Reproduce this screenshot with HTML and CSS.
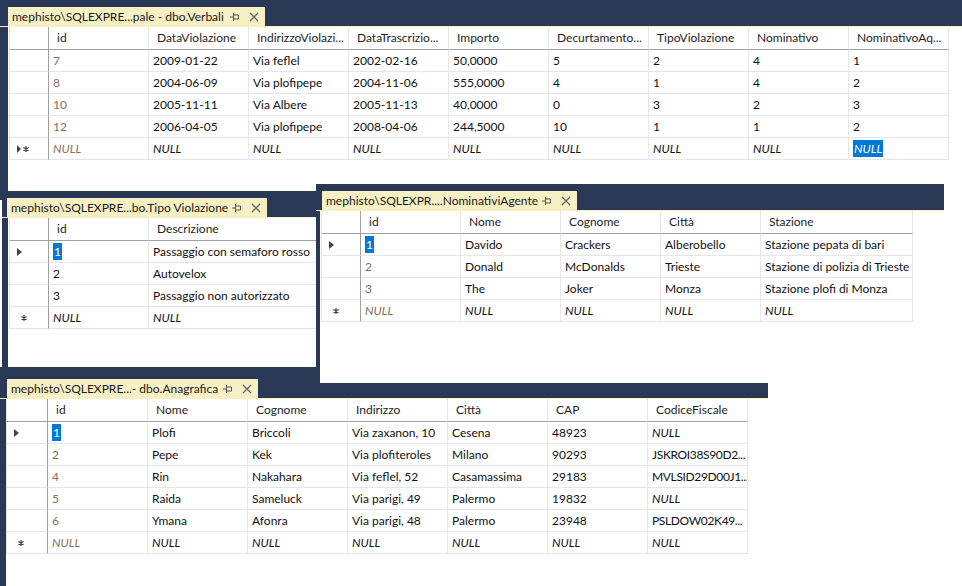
FILE: index.html
```html
<!DOCTYPE html>
<html>
<head>
<meta charset="utf-8">
<link rel="stylesheet" href="styles.css">
</head>
<body>
<div class="desk">

  <!-- Window 1: Verbali -->
  <div class="win w1">
    <div class="bar">
      <div class="tab t1"><span class="ttl">mephisto\SQLEXPRE...pale - dbo.Verbali</span>
        <svg class="pin" width="10" height="10" viewBox="0 0 10 10"><path d="M0 5h3M3.5 1v8M3.5 3h5v4h-5" fill="none" stroke="#555" stroke-width="1"/></svg>
        <svg class="cls" width="10" height="10" viewBox="0 0 10 10"><path d="M1 1l8 8M9 1l-8 8" stroke="#666" stroke-width="1.3"/></svg>
      </div>
    </div>
    <div class="line"></div>
    <div class="body">
      <div class="grid g1">
        <div class="row hdr"><div class="c rh"></div><div class="c">id</div><div class="c">DataViolazione</div><div class="c">IndirizzoViolazi...</div><div class="c">DataTrascrizio...</div><div class="c">Importo</div><div class="c">Decurtamento...</div><div class="c">TipoViolazione</div><div class="c">Nominativo</div><div class="c">NominativoAq...</div></div>
        <div class="row"><div class="c rh"></div><div class="c ro">7</div><div class="c">2009-01-22</div><div class="c">Via feflel</div><div class="c">2002-02-16</div><div class="c">50,0000</div><div class="c">5</div><div class="c">2</div><div class="c">4</div><div class="c">1</div></div>
        <div class="row"><div class="c rh"></div><div class="c ro">8</div><div class="c">2004-06-09</div><div class="c">Via plofipepe</div><div class="c">2004-11-06</div><div class="c">555,0000</div><div class="c">4</div><div class="c">1</div><div class="c">4</div><div class="c">2</div></div>
        <div class="row"><div class="c rh"></div><div class="c ro">10</div><div class="c">2005-11-11</div><div class="c">Via Albere</div><div class="c">2005-11-13</div><div class="c">40,0000</div><div class="c">0</div><div class="c">3</div><div class="c">2</div><div class="c">3</div></div>
        <div class="row"><div class="c rh"></div><div class="c ro">12</div><div class="c">2006-04-05</div><div class="c">Via plofipepe</div><div class="c">2008-04-06</div><div class="c">244,5000</div><div class="c">10</div><div class="c">1</div><div class="c">1</div><div class="c">2</div></div>
        <div class="row"><div class="c rh"><svg class="arr" width="4" height="8" viewBox="0 0 4 8"><path d="M0 0L4 4L0 8Z" fill="#444"/></svg><svg class="ast" width="6" height="6" viewBox="0 0 6 6"><path d="M3 0v6M0.4 1.5l5.2 3M0.4 4.5l5.2-3" stroke="#444" stroke-width="1.2"/></svg></div><div class="c ro nul">NULL</div><div class="c nul">NULL</div><div class="c nul">NULL</div><div class="c nul">NULL</div><div class="c nul">NULL</div><div class="c nul">NULL</div><div class="c nul">NULL</div><div class="c nul">NULL</div><div class="c nul"><span class="sel">NULL</span></div></div>
      </div>
    </div>
  </div>

  <!-- Window 2: Tipo Violazione -->
  <div class="win w2">
    <div class="bar">
      <div class="tab t2"><span class="ttl">mephisto\SQLEXPRE...bo.Tipo Violazione</span>
        <svg class="pin" width="10" height="10" viewBox="0 0 10 10"><path d="M0 5h3M3.5 1v8M3.5 3h5v4h-5" fill="none" stroke="#555" stroke-width="1"/></svg>
        <svg class="cls" width="10" height="10" viewBox="0 0 10 10"><path d="M1 1l8 8M9 1l-8 8" stroke="#666" stroke-width="1.3"/></svg>
      </div>
    </div>
    <div class="line"></div>
    <div class="body">
      <div class="grid g2">
        <div class="row hdr"><div class="c rh"></div><div class="c">id</div><div class="c">Descrizione</div></div>
        <div class="row"><div class="c rh"><svg class="arr" width="5" height="8" viewBox="0 0 5 8"><path d="M0 0L5 4L0 8Z" fill="#444"/></svg></div><div class="c"><span class="sel">1</span></div><div class="c">Passaggio con semaforo rosso</div></div>
        <div class="row"><div class="c rh"></div><div class="c">2</div><div class="c">Autovelox</div></div>
        <div class="row"><div class="c rh"></div><div class="c">3</div><div class="c">Passaggio non autorizzato</div></div>
        <div class="row"><div class="c rh"><svg class="ast" width="6" height="6" viewBox="0 0 6 6"><path d="M3 0v6M0.4 1.5l5.2 3M0.4 4.5l5.2-3" stroke="#444" stroke-width="1.2"/></svg></div><div class="c nul">NULL</div><div class="c nul">NULL</div></div>
      </div>
    </div>
  </div>

  <!-- Window 4: Anagrafica -->
  <div class="win w4">
    <div class="bar">
      <div class="tab t4"><span class="ttl">mephisto\SQLEXPRE...- dbo.Anagrafica</span>
        <svg class="pin" width="10" height="10" viewBox="0 0 10 10"><path d="M0 5h3M3.5 1v8M3.5 3h5v4h-5" fill="none" stroke="#555" stroke-width="1"/></svg>
        <svg class="cls" width="10" height="10" viewBox="0 0 10 10"><path d="M1 1l8 8M9 1l-8 8" stroke="#666" stroke-width="1.3"/></svg>
      </div>
    </div>
    <div class="line"></div>
    <div class="body">
      <div class="grid g4">
        <div class="row hdr"><div class="c rh"></div><div class="c">id</div><div class="c">Nome</div><div class="c">Cognome</div><div class="c">Indirizzo</div><div class="c">Città</div><div class="c">CAP</div><div class="c">CodiceFiscale</div></div>
        <div class="row"><div class="c rh"><svg class="arr" width="5" height="8" viewBox="0 0 5 8"><path d="M0 0L5 4L0 8Z" fill="#444"/></svg></div><div class="c"><span class="sel">1</span></div><div class="c">Plofi</div><div class="c">Briccoli</div><div class="c">Via zaxanon, 10</div><div class="c">Cesena</div><div class="c">48923</div><div class="c nul">NULL</div></div>
        <div class="row"><div class="c rh"></div><div class="c ro">2</div><div class="c">Pepe</div><div class="c">Kek</div><div class="c">Via plofiteroles</div><div class="c">Milano</div><div class="c">90293</div><div class="c fit">JSKROI38S90D2...</div></div>
        <div class="row"><div class="c rh"></div><div class="c ro">4</div><div class="c">Rin</div><div class="c">Nakahara</div><div class="c">Via feflel, 52</div><div class="c">Casamassima</div><div class="c">29183</div><div class="c fit">MVLSID29D00J1...</div></div>
        <div class="row"><div class="c rh"></div><div class="c ro">5</div><div class="c">Raida</div><div class="c">Sameluck</div><div class="c">Via parigi, 49</div><div class="c">Palermo</div><div class="c">19832</div><div class="c nul">NULL</div></div>
        <div class="row"><div class="c rh"></div><div class="c ro">6</div><div class="c">Ymana</div><div class="c">Afonra</div><div class="c">Via parigi, 48</div><div class="c">Palermo</div><div class="c">23948</div><div class="c fit">PSLDOW02K49...</div></div>
        <div class="row"><div class="c rh"><svg class="ast" width="6" height="6" viewBox="0 0 6 6"><path d="M3 0v6M0.4 1.5l5.2 3M0.4 4.5l5.2-3" stroke="#444" stroke-width="1.2"/></svg></div><div class="c ro nul">NULL</div><div class="c nul">NULL</div><div class="c nul">NULL</div><div class="c nul">NULL</div><div class="c nul">NULL</div><div class="c nul">NULL</div><div class="c nul">NULL</div></div>
      </div>
    </div>
  </div>

  <!-- Window 3: NominativiAgente -->
  <div class="win w3">
    <div class="bar">
      <div class="tab t3"><span class="ttl">mephisto\SQLEXPR....NominativiAgente</span>
        <svg class="pin" width="10" height="10" viewBox="0 0 10 10"><path d="M0 5h3M3.5 1v8M3.5 3h5v4h-5" fill="none" stroke="#555" stroke-width="1"/></svg>
        <svg class="cls" width="10" height="10" viewBox="0 0 10 10"><path d="M1 1l8 8M9 1l-8 8" stroke="#666" stroke-width="1.3"/></svg>
      </div>
    </div>
    <div class="line"></div>
    <div class="body">
      <div class="grid g3">
        <div class="row hdr"><div class="c rh"></div><div class="c">id</div><div class="c">Nome</div><div class="c">Cognome</div><div class="c">Città</div><div class="c">Stazione</div></div>
        <div class="row"><div class="c rh"><svg class="arr" width="5" height="8" viewBox="0 0 5 8"><path d="M0 0L5 4L0 8Z" fill="#444"/></svg></div><div class="c"><span class="sel">1</span></div><div class="c">Davido</div><div class="c">Crackers</div><div class="c">Alberobello</div><div class="c">Stazione pepata di bari</div></div>
        <div class="row"><div class="c rh"></div><div class="c ro">2</div><div class="c">Donald</div><div class="c">McDonalds</div><div class="c">Trieste</div><div class="c">Stazione di polizia di Trieste</div></div>
        <div class="row"><div class="c rh"></div><div class="c ro">3</div><div class="c">The</div><div class="c">Joker</div><div class="c">Monza</div><div class="c">Stazione plofi di Monza</div></div>
        <div class="row"><div class="c rh"><svg class="ast" width="6" height="6" viewBox="0 0 6 6"><path d="M3 0v6M0.4 1.5l5.2 3M0.4 4.5l5.2-3" stroke="#444" stroke-width="1.2"/></svg></div><div class="c ro nul">NULL</div><div class="c nul">NULL</div><div class="c nul">NULL</div><div class="c nul">NULL</div><div class="c nul">NULL</div></div>
      </div>
    </div>
  </div>

</div>
</body>
</html>
```

FILE: styles.css
```css
* { box-sizing: border-box; }
html, body { margin: 0; padding: 0; background: #fff; }
body {
  font-family: Lato, "Noto Sans", "DejaVu Sans", sans-serif;
  font-size: 12px;
  color: #1e1e1e;
}
.desk {
  position: relative;
  width: 962px;
  height: 586px;
  overflow: hidden;
  background: #fff;
}

/* windows on the desktop */
.win {
  position: absolute;
  display: flex;
  flex-direction: column;
  overflow: hidden;
  background: #fff;
}
.w1 { left: 0; top: 0; width: 962px; height: 200px; z-index: 1; }
.w2 { left: 2px; top: 191px; width: 316px; height: 176px; z-index: 2; }
.w4 { left: 0; top: 367px; width: 768px; height: 219px; z-index: 3; }
.w3 { left: 316px; top: 184px; width: 628px; height: 199px; z-index: 4; }

.bar {
  background: #293955;
  height: 26px;
  padding-top: 7px;
  display: flex;
  flex: none;
}
.w4 .bar { height: 31px; padding-top: 12px; }

.tab {
  background: #f6f0c4;
  height: 19px;
  display: flex;
  align-items: center;
  padding: 0 6px 0 4px;
  flex: none;
}
.t1 { margin-left: 8px; width: 257px; }
.t2 { margin-left: 5px; width: 260px; }
.t3 { margin-left: 6px; width: 255px; }
.t4 { margin-left: 7px; width: 251px; }
.ttl {
  white-space: nowrap;
  color: #1a1a1a;
  font-size: 12px;
  line-height: 19px;
}
.pin { margin-left: auto; flex: none; }
.cls { margin-left: 9px; flex: none; }

.line { height: 1px; background: #f6f0c4; flex: none; }

.body {
  flex: 1;
  background: #fff;
  border-left: 8px solid #293955;
  padding-left: 1px;
  overflow: hidden;
}
.w2 .body { border-left-width: 6px; }
.w3 .body { border-left-width: 4px; }
.w4 .body { border-left-width: 6px; }

/* data grid */
.grid {
  display: flex;
  flex-direction: column;
  width: max-content;
  border-left: 1px solid #e4e4e4;
}
.row { display: grid; }
.g1 .row { grid-template-columns: 39px repeat(9, 100px); }
.g2 .row { grid-template-columns: 39px 100px 170px; }
.g3 .row { grid-template-columns: 39px 100px 100px 100px 100px 152px; }
.g4 .row { grid-template-columns: 41px repeat(7, 100px); }
.w4 .grid { margin-left: -1px; }

.c {
  height: 22px;
  line-height: 21px;
  padding-left: 4px;
  border-right: 1px solid #e6e6e6;
  border-bottom: 1px solid #e6e6e6;
  white-space: nowrap;
  overflow: hidden;
  color: #111;
}
.hdr .c {
  height: 23px;
  line-height: 22px;
  padding-left: 8px;
  border-bottom: 1px solid #a0a0a0;
  color: #1e1e1e;
}
.c.rh {
  border-right: 1px solid #a0a0a0;
  padding-left: 7px;
  display: flex;
  align-items: center;
  gap: 2px;
}
.hdr .c.rh { padding-left: 0; }
.ro { color: #8c6d58; }
.nul { font-style: italic; }
.fit { letter-spacing: -0.35px; }
.sel {
  background: #0078d7;
  color: #fff;
  padding: 1px 1px;
}
.g2 .ast, .g3 .ast, .g4 .ast { margin-left: 4px; }
```
